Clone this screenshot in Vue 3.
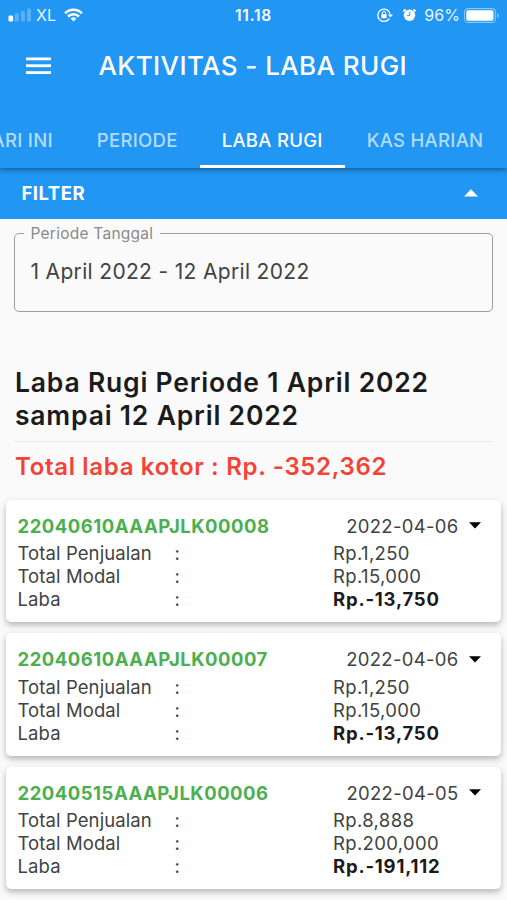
<script setup>
const tabs = [
  { label: 'HARI INI' },
  { label: 'PERIODE' },
  { label: 'LABA RUGI', active: true },
  { label: 'KAS HARIAN' },
]

const entries = [
  { id: '22040610AAAPJLK00008', date: '2022-04-06', sales: '1,250', capital: '15,000', profit: '-13,750' },
  { id: '22040610AAAPJLK00007', date: '2022-04-06', sales: '1,250', capital: '15,000', profit: '-13,750' },
  { id: '22040515AAAPJLK00006', date: '2022-04-05', sales: '8,888', capital: '200,000', profit: '-191,112' },
]
</script>

<template>
  <div class="screen">
    <header class="appbar">
      <div class="status">
        <div class="status-left">
          <svg class="signal" width="24" height="14" viewBox="0 0 24 14" fill="#fff">
            <rect x="0.5" y="7.5" width="4.6" height="6" rx="1.3" />
            <g opacity="0.25">
              <rect x="6.8" y="5.3" width="4" height="8.2" rx="1.2" />
              <rect x="12.9" y="3" width="4" height="10.5" rx="1.2" />
              <rect x="19" y="0.5" width="4" height="13" rx="1.2" />
            </g>
          </svg>
          <span class="carrier">XL</span>
          <svg class="wifi" width="19" height="14" viewBox="0 0 19 14" fill="none" stroke="#fff" stroke-width="2.5">
            <path d="M1 5.3C5.8.5 13.2.5 18 5.3" />
            <path d="M4 8.5c3.2-3.1 7.8-3.1 11 0" />
            <path d="M9.5 13.5 6.6 10.6a4.2 4.2 0 0 1 5.800 0z" fill="#fff" stroke="none" />
          </svg>
        </div>
        <span class="clock">11.18</span>
        <div class="status-right">
          <svg class="lock" width="16" height="14" viewBox="0 0 16 14" fill="none" stroke="#fff">
            <path d="M12.3 10.6A6.2 6.2 0 1 1 13.200 6.500" stroke-width="1.3" />
            <path d="M10.900 6.400h5l-2.500 3z" fill="#fff" stroke="none" />
            <rect x="4.400" y="6.200" width="5.200" height="4" rx=".5" fill="#fff" stroke="none" />
            <path d="M5.400 6.500V5a1.600 1.600 0 0 1 3.200 0v1.500" stroke-width="1" />
          </svg>
          <svg class="alarm" width="15" height="14" viewBox="0 0 15 14">
            <circle cx="7.500" cy="7.300" r="5.700" fill="#fff" />
            <path d="M1.300 3.400 3.600 1.300M11.400 1.300l2.300 2.100" stroke="#fff" stroke-width="1.700" fill="none" />
            <path d="M7.700 4v3.700H4.900" stroke="#2196f3" stroke-width="1" fill="none" />
          </svg>
          <span class="percent">96%</span>
          <svg class="battery" width="36" height="15" viewBox="0 0 36 15">
            <rect x=".6" y=".6" width="30.800" height="13.800" rx="3.500" fill="none" stroke="#fff" stroke-opacity=".45" stroke-width="1.100" />
            <rect x="2.300" y="2.300" width="27.200" height="10.400" rx="1.600" fill="#fff" />
            <path d="M33 5.200c2.300.6 2.300 4 0 4.600z" fill="#fff" fill-opacity=".5" />
          </svg>
        </div>
      </div>

      <div class="toolbar">
        <svg class="menu" width="26" height="18" viewBox="0 0 26 18" fill="#fff">
          <rect x="0" y=".5" width="25" height="2.800" />
          <rect x="0" y="7.300" width="25" height="2.800" />
          <rect x="0" y="14.200" width="25" height="2.800" />
        </svg>
        <h1 class="title">AKTIVITAS - LABA RUGI</h1>
      </div>

      <nav class="tabs">
        <span v-for="tab in tabs" :key="tab.label" class="tab" :class="{ active: tab.active }">{{ tab.label }}</span>
      </nav>
    </header>

    <section class="filter">
      <span>FILTER</span>
      <svg width="14" height="8" viewBox="0 0 14 8"><path d="M0 7.500 7 .3l7 7.200z" fill="#fff" /></svg>
    </section>

    <main class="content">
      <fieldset class="period-field">
        <legend>Periode Tanggal</legend>
        <div class="range">1 April 2022 - 12 April 2022</div>
      </fieldset>

      <h2 class="heading">Laba Rugi Periode 1 April 2022<br />sampai 12 April 2022</h2>
      <p class="total">Total laba kotor : Rp. -352,362</p>
    </main>

    <div class="cards">
      <article v-for="entry in entries" :key="entry.id" class="card">
        <div class="card-head">
          <span class="id">{{ entry.id }}</span>
          <span class="date">{{ entry.date }}</span>
          <svg width="12" height="7" viewBox="0 0 12 7"><path d="M0 .3h12L6 6.500z" fill="#000" /></svg>
        </div>
        <div class="row"><span class="name">Total Penjualan</span><span>:</span><span>Rp.{{ entry.sales }}</span></div>
        <div class="row"><span class="name">Total Modal</span><span>:</span><span>Rp.{{ entry.capital }}</span></div>
        <div class="row"><span class="name">Laba</span><span>:</span><span class="profit">Rp.{{ entry.profit }}</span></div>
      </article>
    </div>
  </div>
</template>

<style>
body {
  margin: 0;
  background: #fafafa;
}
</style>

<style scoped>
.screen {
  display: flex;
  flex-direction: column;
  width: 507px;
  height: 900px;
  overflow: hidden;
  background: #fafafa;
  font-family: Inter, "Liberation Sans", sans-serif;
  color: #424242;
  white-space: nowrap;
}
svg {
  display: block;
  flex: none;
}
.appbar {
  display: flex;
  flex-direction: column;
  flex: none;
  height: 168px;
  background: #2196f3;
  color: #fff;
  box-shadow: 0 2px 5px rgba(0, 0, 0, 0.36);
  z-index: 1;
}
.status {
  display: grid;
  grid-template-columns: 1fr auto 1fr;
  align-items: center;
  height: 30px;
  padding: 0 7px 0 8px;
  font-size: 15.5px;
}
.status-left,
.status-right {
  display: flex;
  align-items: center;
}
.status-right {
  justify-content: flex-end;
}
.carrier {
  margin-left: 4px;
  width: 19px;
  font-size: 16px;
  opacity: 0.9;
}
.wifi {
  margin-left: 9px;
}
.clock {
  margin-right: 1px;
  font-weight: 600;
  letter-spacing: 0.8px;
}
.lock {
  margin-right: 1px;
}
.alarm {
  margin-left: 8px;
}
.percent {
  margin-left: 7px;
  font-size: 16px;
  letter-spacing: 0.1px;
  opacity: 0.9;
}
.battery {
  margin-left: 4px;
}
.toolbar {
  display: flex;
  align-items: center;
  box-sizing: border-box;
  height: 72px;
  padding: 0 0 1px 26px;
}
.title {
  margin: 0 0 0 46.5px;
  font-size: 26px;
  font-weight: 500;
  letter-spacing: 0.42px;
}
.tabs {
  display: flex;
  height: 66px;
  margin-left: -44.5px;
  font-size: 18.5px;
  font-weight: 500;
}
.tab {
  flex: none;
  box-sizing: border-box;
  height: 66px;
  padding: 5px 22px 0;
  line-height: 66px;
  color: rgba(255, 255, 255, 0.68);
  letter-spacing: 0.3px;
  border-bottom: 3px solid transparent;
}
.tab.active {
  color: #fff;
  border-bottom-color: #fff;
}
.filter {
  display: flex;
  flex: none;
  align-items: center;
  justify-content: space-between;
  box-sizing: border-box;
  height: 51px;
  padding: 0 29.5px 1px 21.5px;
  background: #2196f3;
  color: #fff;
  font-size: 18.5px;
  font-weight: 700;
  letter-spacing: 0.5px;
}
.content {
  display: flex;
  flex-direction: column;
  padding: 6px 14px 0;
}
.period-field {
  box-sizing: border-box;
  height: 87px;
  margin: 0;
  padding: 0 0 0 9px;
  border: 1px solid #9e9e9e;
  border-radius: 5px;
}
.period-field legend {
  padding: 0 7px 0 6.5px;
  font-size: 15.5px;
  line-height: 17px;
  letter-spacing: 0.25px;
  color: #8a8a8a;
}
.range {
  padding: 18px 6.5px 0;
  font-size: 21px;
  line-height: 24px;
  letter-spacing: 0.33px;
}
.heading {
  margin: 54px 0 0;
  padding: 0 1px 10px;
  border-bottom: 1px solid #eaeaea;
  font-size: 26.5px;
  line-height: 32.5px;
  font-weight: 600;
  letter-spacing: 0.8px;
  color: #1b1b1b;
}
.total {
  margin: 9px 1px 0;
  font-size: 24px;
  line-height: 32px;
  font-weight: 600;
  letter-spacing: 0.68px;
  color: #f44336;
}
.cards {
  display: flex;
  flex-direction: column;
  gap: 11px;
  padding: 16.5px 6px 0 6px;
}
.card {
  box-sizing: border-box;
  height: 122.5px;
  padding: 14.5px 20.5px 0 11.5px;
  border-radius: 5px;
  background: #fff;
  box-shadow: 0 3px 6px rgba(0, 0, 0, 0.28);
}
.card-head {
  display: flex;
  align-items: center;
  height: 23.5px;
  padding-bottom: 4.5px;
  font-size: 18.5px;
}
.id {
  font-weight: 700;
  letter-spacing: 0.5px;
  color: #4caf50;
}
.date {
  margin-left: auto;
  margin-right: 10px;
  letter-spacing: 0.3px;
}
.row {
  display: grid;
  grid-template-columns: 157px 158.5px auto;
  font-size: 18.5px;
  line-height: 23px;
  letter-spacing: 0.35px;
}
.name {
  letter-spacing: 0.1px;
}
.profit {
  font-weight: 700;
  letter-spacing: 0.8px;
  color: #1b1b1b;
}
</style>
